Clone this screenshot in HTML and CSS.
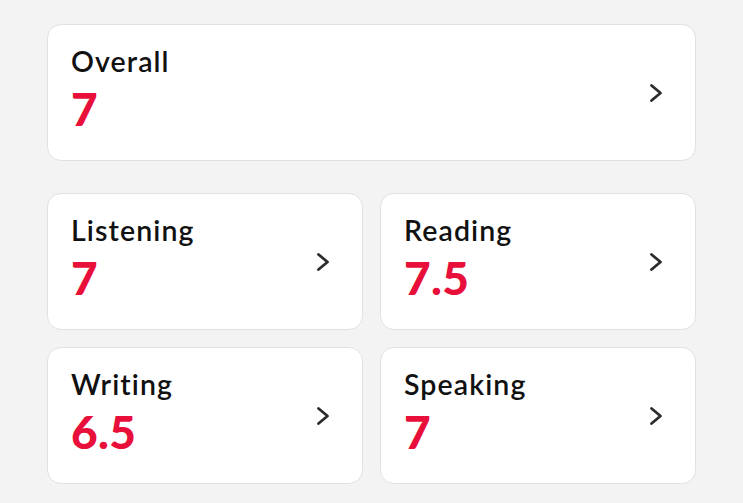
FILE: index.html
```html
<!DOCTYPE html>
<html lang="en">
<head>
  <meta charset="UTF-8" />
  <meta name="viewport" content="width=device-width, initial-scale=1" />
  <title>Band Scores</title>
  <link rel="stylesheet" href="styles.css">
</head>
<body>
  <div class="scores">
    <a class="score-card overall" href="#">
      <div class="score-text">
        <div class="score-label">Overall</div>
        <div class="score-value">7</div>
      </div>
      <svg class="chevron" viewBox="0 0 14 20"><path d="M2.5 2.5 L11.5 10 L2.5 17.5" /></svg>
    </a>

    <div class="score-grid">
      <a class="score-card" href="#">
        <div class="score-text">
          <div class="score-label">Listening</div>
          <div class="score-value">7</div>
        </div>
        <svg class="chevron" viewBox="0 0 14 20"><path d="M2.5 2.5 L11.5 10 L2.5 17.5" /></svg>
      </a>
      <a class="score-card" href="#">
        <div class="score-text">
          <div class="score-label">Reading</div>
          <div class="score-value">7.5</div>
        </div>
        <svg class="chevron" viewBox="0 0 14 20"><path d="M2.5 2.5 L11.5 10 L2.5 17.5" /></svg>
      </a>
      <a class="score-card" href="#">
        <div class="score-text">
          <div class="score-label">Writing</div>
          <div class="score-value">6.5</div>
        </div>
        <svg class="chevron" viewBox="0 0 14 20"><path d="M2.5 2.5 L11.5 10 L2.5 17.5" /></svg>
      </a>
      <a class="score-card" href="#">
        <div class="score-text">
          <div class="score-label">Speaking</div>
          <div class="score-value">7</div>
        </div>
        <svg class="chevron" viewBox="0 0 14 20"><path d="M2.5 2.5 L11.5 10 L2.5 17.5" /></svg>
      </a>
    </div>
  </div>
</body>
</html>
```

FILE: styles.css
```css
body {
  margin: 0;
  font-family: Lato, "Noto Sans", sans-serif;
  background-color: #f3f3f3;
}
.scores {
  padding: 24px 47px;
}
.score-card {
  display: flex;
  align-items: center;
  justify-content: space-between;
  height: 137px;
  box-sizing: border-box;
  padding: 0 32px 0 23px;
  background-color: #fff;
  border: 1px solid #e1e1e1;
  border-radius: 14px;
  text-decoration: none;
}
.score-text {
  align-self: flex-start;
  padding-top: 20px;
}
.overall {
  margin-bottom: 32px;
}
.score-grid {
  display: grid;
  grid-template-columns: 1fr 1fr;
  gap: 17px;
}
.score-label {
  font-size: 28.5px;
  font-weight: 600;
  letter-spacing: 1.1px;
  color: #111;
  line-height: 32px;
}
.score-value {
  font-size: 46px;
  font-weight: 900;
  letter-spacing: 0.3px;
  color: #e8103a;
  line-height: 50px;
  margin-top: 7px;
}
.chevron {
  width: 14px;
  height: 20px;
  fill: none;
  stroke: #2c2c2e;
  stroke-width: 2.8;
  stroke-linecap: round;
  stroke-linejoin: round;
}
```
